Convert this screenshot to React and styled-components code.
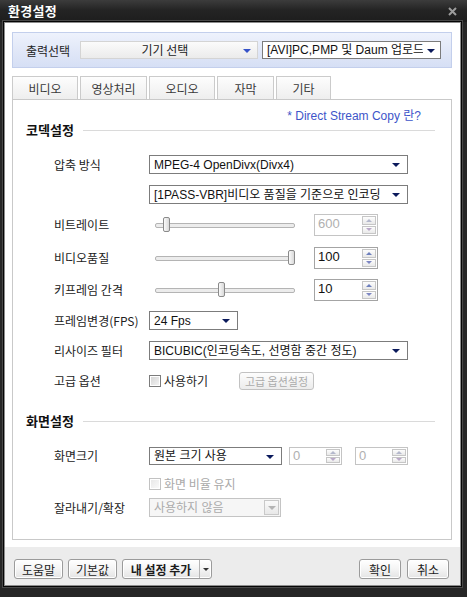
import React from "react";
import styled, { createGlobalStyle } from "styled-components";

const GlobalStyle = createGlobalStyle`
  html, body {
    margin: 0;
    padding: 0;
    background: #1c1c1c;
  }
  body {
    font-family: "Noto Sans CJK KR", "Noto Sans", sans-serif;
    font-size: 12px;
    color: #222;
  }
`;

const mixed = `"Liberation Sans", "Noto Sans CJK KR", sans-serif`;

const Window = styled.div`
  width: 467px;
  height: 597px;
  display: flex;
  flex-direction: column;
  background: #262626;
`;

const TitleBar = styled.div`
  height: 22px;
  flex-shrink: 0;
  display: flex;
  align-items: center;
  justify-content: space-between;
  padding: 0 10px 0 8px;
  background: linear-gradient(#3c3c3c, #242424 45%, #1d1d1d);
`;

const Title = styled.span`
  color: #fff;
  font-weight: bold;
  font-size: 13px;
  line-height: 22px;
  letter-spacing: 0.3px;
`;

const Frame = styled.div`
  flex: 1;
  display: flex;
  padding: 0 6px 11px 4px;
`;

const Body = styled.div`
  flex: 1;
  display: flex;
  flex-direction: column;
  background: #fff;
  border: 1px solid #8c8c8c;
  box-shadow: 0 0 0 1px #050505, 0 0 0 2px #484848;
`;

const Content = styled.div`
  padding: 9px 8px 0 7px;
  display: flex;
  flex-direction: column;
`;

const OutputBar = styled.div`
  height: 36px;
  box-sizing: border-box;
  display: flex;
  align-items: center;
  padding-left: 13px;
  border: 1px solid #c3cfec;
  background: linear-gradient(#eef2fc, #dfe6f7 60%, #d6dff5);
`;

const OutputLabel = styled.span`
  width: 54px;
  font-size: 12px;
  color: #222;
`;

const DeviceSelect = styled.div`
  width: 178px;
  height: 18px;
  box-sizing: border-box;
  display: flex;
  align-items: center;
  border: 1px solid #d4d4d4;
  background: linear-gradient(#fbfbfb, #ebebeb);
  span {
    flex: 1;
    text-align: center;
    padding-left: 10px;
    color: #222;
    line-height: 16px;
  }
`;

const Arrow = styled.i`
  width: 0;
  height: 0;
  flex-shrink: 0;
  border-left: 4px solid transparent;
  border-right: 4px solid transparent;
  border-top: 4px solid ${(p) => p.$color || "#0b1a5c"};
  margin: 1px ${(p) => p.$mr ?? 7}px 0 4px;
`;

const Tabs = styled.div`
  display: flex;
  gap: 2px;
  margin-top: 8px;
  height: 23px;
`;

const Tab = styled.div`
  width: ${(p) => p.$w}px;
  box-sizing: border-box;
  border: 1px solid #cbcbcb;
  border-bottom: none;
  background: linear-gradient(#fdfdfd, #eeeeee);
  display: flex;
  align-items: center;
  justify-content: center;
  color: #3a3a3a;
  font-size: 12px;
`;

const Panel = styled.div`
  height: 441px;
  box-sizing: border-box;
  border: 1px solid #c9c9c9;
  padding-top: 10px;
  display: flex;
  flex-direction: column;
`;

const HelpLink = styled.div`
  height: 13px;
  line-height: 13px;
  text-align: right;
  padding-right: 30px;
  color: #3d55c9;
  font-family: ${mixed};
  font-size: 12px;
`;

const SectionHead = styled.div`
  display: flex;
  align-items: center;
  height: 14px;
  margin-top: ${(p) => p.$mt || 0}px;
  padding: 0 16px 0 13px;
  b {
    font-size: 13px;
    color: #111;
    line-height: 14px;
  }
  &::after {
    content: "";
    flex: 1;
    height: 1px;
    margin-left: 9px;
    background: #dadada;
  }
`;

const Row = styled.div`
  display: flex;
  align-items: center;
  height: ${(p) => p.$h}px;
  margin-top: ${(p) => p.$mt}px;
  padding-left: ${(p) => (p.$bare ? 136 : 41)}px;
`;

const Label = styled.span`
  width: 95px;
  flex-shrink: 0;
  line-height: 14px;
  color: #222;
  white-space: nowrap;
`;

const Combo = styled.div`
  width: ${(p) => p.$w}px;
  height: ${(p) => p.$h || 19}px;
  box-sizing: border-box;
  flex-shrink: 0;
  display: flex;
  align-items: center;
  border: 1px solid ${(p) => (p.$off ? "#c4c4c4" : "#7c7c7c")};
  background: ${(p) => (p.$off ? "#f6f6f6" : "#fff")};
  padding-left: 4px;
  span {
    flex: 1;
    overflow: hidden;
    white-space: nowrap;
    font-family: ${mixed};
    font-size: 12px;
    color: ${(p) => (p.$off ? "#ababab" : "#111")};
    line-height: 16px;
  }
`;

const DropBtn = styled.div`
  width: 15px;
  height: 15px;
  box-sizing: border-box;
  margin-right: 1px;
  border: 1px solid #c9c9c9;
  background: linear-gradient(#fafafa, #e8e8e8);
  display: flex;
  align-items: center;
  justify-content: center;
`;

const SliderTrack = styled.div`
  position: relative;
  width: 140px;
  height: 16px;
  margin-left: 6px;
  flex-shrink: 0;
  &::before {
    content: "";
    position: absolute;
    left: 0;
    right: 0;
    top: 6px;
    height: 3px;
    border: 1px solid #b4b4b4;
    border-radius: 2px;
    background: #ececec;
  }
`;

const Thumb = styled.div`
  position: absolute;
  top: 0;
  width: 7px;
  height: 15px;
  box-sizing: border-box;
  border: 1px solid #8a8a8a;
  border-radius: 2px;
  background: linear-gradient(90deg, #fafafa, #d9d9d9);
`;

const Spin = styled.div`
  width: ${(p) => p.$w}px;
  height: ${(p) => p.$h}px;
  margin-left: ${(p) => p.$ml}px;
  box-sizing: border-box;
  flex-shrink: 0;
  display: flex;
  border: 1px solid ${(p) => (p.$off ? "#c4c4c4" : "#a4a4a4")};
  background: #fff;
  padding: 1px;
`;

const SpinValue = styled.span`
  flex: 1;
  padding-left: 2px;
  font-family: "Liberation Sans", "Noto Sans", sans-serif;
  font-size: 13px;
  line-height: ${(p) => (p.$tight ? 14 : 16)}px;
  color: ${(p) => (p.$off ? "#b0b0b0" : "#111")};
`;

const SpinButtons = styled.div`
  width: 14px;
  display: flex;
  flex-direction: column;
  gap: 1px;
`;

const SpinBtn = styled.div`
  flex: 1;
  box-sizing: border-box;
  border: 1px solid #c6c6c6;
  background: linear-gradient(#fdfdfd, #e9e9e9);
  display: flex;
  align-items: center;
  justify-content: center;
  &::after {
    content: "";
    border-left: 3px solid transparent;
    border-right: 3px solid transparent;
    ${(p) =>
      p.$up
        ? `border-bottom: 3px solid ${p.$off ? "#b4b8cc" : "#6d7fbd"};`
        : `border-top: 3px solid ${p.$off ? "#b9a8c8" : "#7d86c2"};`}
  }
`;

const Check = styled.span`
  display: inline-flex;
  align-items: center;
  width: ${(p) => p.$w || "auto"};
  color: ${(p) => (p.$off ? "#a9a9a9" : "#222")};
  line-height: 14px;
  &::before {
    content: "";
    width: 12px;
    height: 12px;
    box-sizing: border-box;
    margin-right: 3px;
    border: 1px solid ${(p) => (p.$off ? "#c2c2c2" : "#7c7c7c")};
    background: ${(p) =>
      p.$off
        ? "linear-gradient(135deg, #e6e6e6, #fbfbfb)"
        : "linear-gradient(135deg, #d2d2d2, #f6f6f6)"};
    box-shadow: inset 0 0 0 1px #fff;
  }
`;

const GhostButton = styled.div`
  width: 75px;
  height: 18px;
  box-sizing: border-box;
  border: 1px solid #c2c2c2;
  border-radius: 3px;
  background: linear-gradient(#fdfdfd, #ececec);
  color: #ababab;
  font-size: 11px;
  display: flex;
  align-items: center;
  justify-content: center;
`;

const Footer = styled.div`
  margin-top: auto;
  height: 38px;
  box-sizing: border-box;
  padding: 12px 11px 0 9px;
  background: #ececec;
  display: flex;
  gap: 5px;
`;

const Button = styled.div`
  width: ${(p) => p.$w}px;
  height: 20px;
  box-sizing: border-box;
  border: 1px solid #9b9b9b;
  border-radius: 3px;
  background: linear-gradient(#ffffff, #f4f4f4 50%, #e4e4e4);
  box-shadow: inset 0 0 0 1px #fff;
  display: flex;
  align-items: center;
  justify-content: center;
  font-size: 12px;
  color: #1c1c1c;
  margin-left: ${(p) => (p.$push ? "auto" : "0")};
  margin-right: ${(p) => p.$mr || 0}px;
`;

const SplitButton = styled(Button)`
  justify-content: flex-start;
  b {
    width: 76px;
    text-align: center;
    font-size: 12px;
  }
  i {
    flex: 1;
    height: 100%;
    border-left: 1px solid #b5b5b5;
    display: flex;
    align-items: center;
    justify-content: center;
  }
  i::after {
    content: "";
    border-left: 3px solid transparent;
    border-right: 3px solid transparent;
    border-top: 3px solid #333;
  }
`;

const Slider = ({ pos }) => (
  <SliderTrack>
    <Thumb style={{ left: pos }} />
  </SliderTrack>
);

const Spinner = ({ value, w = 64, h = 22, ml = 19, off }) => (
  <Spin $w={w} $h={h} $ml={ml} $off={off}>
    <SpinValue $off={off} $tight={h < 20}>
      {value}
    </SpinValue>
    <SpinButtons>
      <SpinBtn $up $off={off} />
      <SpinBtn $off={off} />
    </SpinButtons>
  </Spin>
);

const Select = ({ w, h, children }) => (
  <Combo $w={w} $h={h}>
    <span>{children}</span>
    <Arrow />
  </Combo>
);

export default function App() {
  return (
    <Window>
      <GlobalStyle />
      <TitleBar>
        <Title>환경설정</Title>
        <svg width="9" height="9" viewBox="0 0 9 9">
          <path d="M1 1L8 8M8 1L1 8" stroke="#9c9c9c" strokeWidth="2" />
        </svg>
      </TitleBar>
      <Frame>
        <Body>
          <Content>
            <OutputBar>
              <OutputLabel>출력선택</OutputLabel>
              <DeviceSelect>
                <span>기기 선택</span>
                <Arrow $color="#3552c8" $mr={6} />
              </DeviceSelect>
              <Combo $w={179} $h={18} style={{ marginLeft: 4 }}>
                <span>[AVI]PC,PMP 및 Daum 업로드</span>
                <Arrow $mr={5} />
              </Combo>
            </OutputBar>

            <Tabs>
              <Tab $w={66}>비디오</Tab>
              <Tab $w={67}>영상처리</Tab>
              <Tab $w={66}>오디오</Tab>
              <Tab $w={57}>자막</Tab>
              <Tab $w={55}>기타</Tab>
            </Tabs>

            <Panel>
              <HelpLink>* Direct Stream Copy 란?</HelpLink>
              <SectionHead>
                <b>코덱설정</b>
              </SectionHead>

              <Row $h={19} $mt={18}>
                <Label>압축 방식</Label>
                <Select w={259}>MPEG-4 OpenDivx(Divx4)</Select>
              </Row>
              <Row $h={19} $mt={11} $bare>
                <Select w={259}>[1PASS-VBR]비디오 품질을 기준으로 인코딩</Select>
              </Row>

              <Row $h={22} $mt={10}>
                <Label>비트레이트</Label>
                <Slider pos={8} />
                <Spinner value="600" off />
              </Row>
              <Row $h={22} $mt={11}>
                <Label>비디오품질</Label>
                <Slider pos={133} />
                <Spinner value="100" />
              </Row>
              <Row $h={22} $mt={10}>
                <Label>키프레임 간격</Label>
                <Slider pos={63} />
                <Spinner value="10" />
              </Row>

              <Row $h={19} $mt={10}>
                <Label>프레임변경(FPS)</Label>
                <Select w={89}>24 Fps</Select>
              </Row>
              <Row $h={19} $mt={11}>
                <Label>리사이즈 필터</Label>
                <Select w={259}>BICUBIC(인코딩속도, 선명함 중간 정도)</Select>
              </Row>
              <Row $h={18} $mt={12}>
                <Label>고급 옵션</Label>
                <Check $w="90px">사용하기</Check>
                <GhostButton>고급 옵션설정</GhostButton>
              </Row>

              <SectionHead $mt={24}>
                <b>화면설정</b>
              </SectionHead>

              <Row $h={18} $mt={19}>
                <Label>화면크기</Label>
                <Select w={133} h={18}>
                  원본 크기 사용
                </Select>
                <Spinner value="0" w={53} h={18} ml={7} off />
                <Spinner value="0" w={53} h={18} ml={13} off />
              </Row>
              <Row $h={13} $mt={12} $bare>
                <Check $off>화면 비율 유지</Check>
              </Row>
              <Row $h={19} $mt={8}>
                <Label>잘라내기/확장</Label>
                <Combo $w={132} $off>
                  <span>사용하지 않음</span>
                  <DropBtn>
                    <Arrow $color="#b4b4b4" $mr={0} style={{ margin: 0 }} />
                  </DropBtn>
                </Combo>
              </Row>
            </Panel>
          </Content>

          <Footer>
            <Button $w={49}>도움말</Button>
            <Button $w={49}>기본값</Button>
            <SplitButton $w={90}>
              <b>내 설정 추가</b>
              <i />
            </SplitButton>
            <Button $w={42} $push style={{ marginRight: 1 }}>
              확인
            </Button>
            <Button $w={42}>취소</Button>
          </Footer>
        </Body>
      </Frame>
    </Window>
  );
}
